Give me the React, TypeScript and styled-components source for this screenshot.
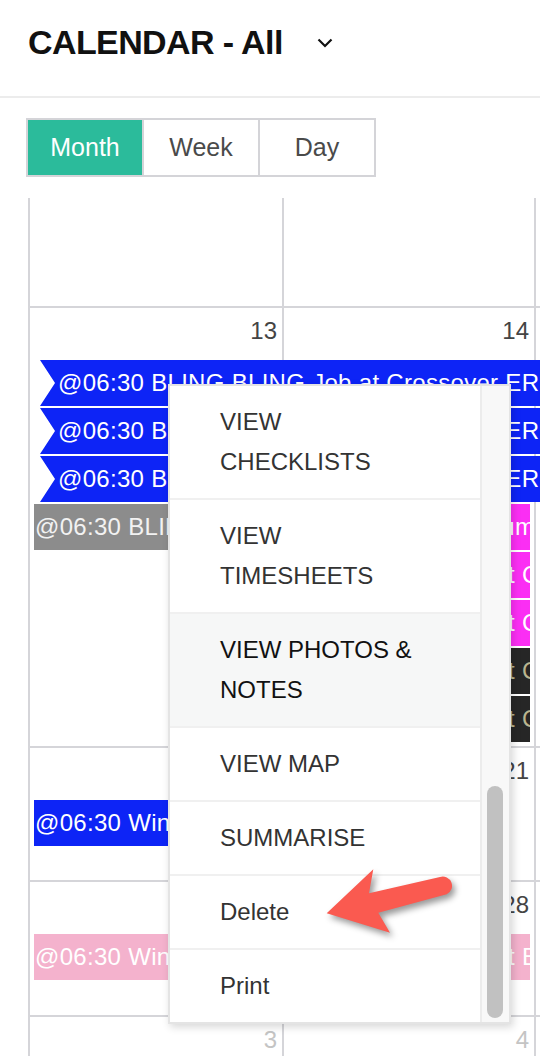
import styled, { createGlobalStyle } from 'styled-components';

const GlobalStyle = createGlobalStyle`
  * { box-sizing: border-box; }
  body {
    margin: 0;
    background: #fff;
    font-family: 'Liberation Sans', Arial, sans-serif;
    overflow: hidden;
  }
`;

const Page = styled.div`
  position: relative;
  width: 540px;
  height: 1056px;
  overflow: hidden;
`;

const Header = styled.header`
  display: flex;
  align-items: center;
  height: 98px;
  padding: 0 28px 12px;
  border-bottom: 2px solid #ececec;
`;

const Title = styled.h1`
  margin: 0;
  font-size: 34px;
  font-weight: 700;
  letter-spacing: -0.6px;
  line-height: 1;
  color: #111;
`;

const Chevron = styled.svg`
  margin-left: 34px;
  margin-top: 2px;
`;

const TabBar = styled.div`
  display: flex;
  width: fit-content;
  margin: 20px 0 0 26px;
  border: 2px solid #d4d4d8;
`;

const Tab = styled.button<{ $active?: boolean }>`
  width: 114px;
  height: 55px;
  padding: 0;
  border: none;
  font-family: inherit;
  font-size: 25px;
  background: ${(p) => (p.$active ? '#2bbb9b' : '#fff')};
  color: ${(p) => (p.$active ? '#fff' : '#4a4a4a')};

  & + & {
    width: 116px;
    border-left: 2px solid #d4d4d8;
  }
`;

const Calendar = styled.div`
  width: 758px;
  margin: 21px 0 0 28px;
`;

const Week = styled.div<{ $rows: number; $height: number }>`
  display: grid;
  grid-template-columns: 254px 252px 252px;
  grid-template-rows: ${(p) => (p.$rows > 0 ? `52px repeat(${p.$rows}, 48px) 1fr` : '52px 1fr')};
  height: ${(p) => p.$height}px;
  border-bottom: 2px solid #d5d5d9;
`;

const DayCell = styled.div<{ $col: number; $muted?: boolean }>`
  grid-row: 1 / -1;
  grid-column: ${(p) => p.$col};
  padding: 9px 5px 0 0;
  border-left: 2px solid #d5d5d9;
  text-align: right;
  font-size: 24px;
  line-height: 28px;
  color: ${(p) => (p.$muted ? '#c4c4c4' : '#444')};
`;

const EventBar = styled.div<{
  $row: number;
  $col: number;
  $span?: number;
  $bg: string;
  $fg?: string;
  $notched?: boolean;
}>`
  grid-row: ${(p) => p.$row + 2};
  grid-column: ${(p) => `${p.$col} / span ${p.$span || 1}`};
  z-index: 1;
  height: 46px;
  margin: 0 4px 0 ${(p) => (p.$notched ? 12 : 6)}px;
  padding-left: ${(p) => (p.$notched ? 18 : 1)}px;
  background: ${(p) => p.$bg};
  color: ${(p) => p.$fg || '#fff'};
  font-size: 24px;
  letter-spacing: 0.3px;
  line-height: 46px;
  white-space: nowrap;
  overflow: hidden;
  clip-path: ${(p) => (p.$notched ? 'polygon(0 0, 100% 0, 100% 100%, 0 100%, 15px 50%)' : 'none')};
`;

const Menu = styled.div`
  position: absolute;
  left: 168px;
  top: 384px;
  z-index: 5;
  display: flex;
  width: 343px;
  height: 640px;
  overflow: hidden;
  background: #fff;
  border: 2px solid #e4e4e4;
  box-shadow: 2px 3px 8px rgba(0, 0, 0, 0.16);
`;

const MenuList = styled.ul`
  flex: 1;
  margin: 0;
  padding: 0;
  list-style: none;
`;

const MenuItem = styled.li<{ $hover?: boolean }>`
  padding: 16px 12px 16px 50px;
  font-size: 24px;
  line-height: 40px;
  color: ${(p) => (p.$hover ? '#111' : '#333')};
  background: ${(p) => (p.$hover ? '#f6f7f7' : '#fff')};
  border-bottom: 2px solid #f0f0f0;

  &:last-child {
    border-bottom: none;
  }
`;

const ScrollGutter = styled.div`
  display: flex;
  flex-direction: column;
  justify-content: flex-end;
  width: 29px;
  padding: 0 6px 4px 5px;
  background: #f8f8f8;
  border-left: 2px solid #ececec;
`;

const ScrollThumb = styled.div`
  height: 232px;
  border-radius: 8px;
  background: #c1c1c1;
`;

const Pointer = styled.svg`
  position: absolute;
  left: 320px;
  top: 861px;
  z-index: 6;
  filter: drop-shadow(3px 4px 3px rgba(0, 0, 0, 0.4));
`;

const BLUE = '#0d24f6';
const MAGENTA = '#fb2ef4';
const DARK = '#262626';
const GREY = '#8c8c8c';
const PINK = '#f4b2cd';

const bling = '@06:30 BLING BLING Job at Crossover ER Hall';

export default function App() {
  return (
    <Page>
      <GlobalStyle />
      <Header>
        <Title>CALENDAR - All</Title>
        <Chevron width="16" height="10" viewBox="0 0 16 10">
          <polyline points="1.5,1.5 8,8 14.5,1.5" fill="none" stroke="#111" strokeWidth="2.2" />
        </Chevron>
      </Header>

      <TabBar>
        <Tab $active>Month</Tab>
        <Tab>Week</Tab>
        <Tab>Day</Tab>
      </TabBar>

      <Calendar>
        <Week $rows={0} $height={110}>
          <DayCell $col={1} />
          <DayCell $col={2} />
          <DayCell $col={3} />
        </Week>

        <Week $rows={8} $height={440}>
          <DayCell $col={1}>13</DayCell>
          <DayCell $col={2}>14</DayCell>
          <DayCell $col={3}>15</DayCell>
          <EventBar $row={0} $col={1} $span={3} $bg={BLUE} $notched>{bling}</EventBar>
          <EventBar $row={1} $col={1} $span={3} $bg={BLUE} $notched>{bling}</EventBar>
          <EventBar $row={2} $col={1} $span={3} $bg={BLUE} $notched>{bling}</EventBar>
          <EventBar $row={3} $col={1} $bg={GREY} $fg="#f2f2f2">@06:30 BLING BLING Job</EventBar>
          <EventBar $row={3} $col={2} $bg={MAGENTA}>@06:30 Pool Job Sum Room</EventBar>
          <EventBar $row={4} $col={2} $bg={MAGENTA}>@06:30 Lawn Job at Crossover</EventBar>
          <EventBar $row={5} $col={2} $bg={MAGENTA}>@06:30 Lawn Job at Crossover</EventBar>
          <EventBar $row={6} $col={2} $bg={DARK} $fg="#b9b58f">@06:30 Lawn Job at  Crossover</EventBar>
          <EventBar $row={7} $col={2} $bg={DARK} $fg="#b9b58f">@06:30 Lawn Job at  Crossover</EventBar>
        </Week>

        <Week $rows={1} $height={134}>
          <DayCell $col={1}>20</DayCell>
          <DayCell $col={2}>21</DayCell>
          <DayCell $col={3}>22</DayCell>
          <EventBar $row={0} $col={1} $bg={BLUE}>@06:30 Window Cleaning</EventBar>
        </Week>

        <Week $rows={1} $height={135}>
          <DayCell $col={1}>27</DayCell>
          <DayCell $col={2}>28</DayCell>
          <DayCell $col={3}>29</DayCell>
          <EventBar $row={0} $col={1} $bg={PINK}>@06:30 Window Cleaning</EventBar>
          <EventBar $row={0} $col={2} $bg={PINK}>@06:30 Lawn Job at Eastside</EventBar>
        </Week>

        <Week $rows={0} $height={120}>
          <DayCell $col={1} $muted>3</DayCell>
          <DayCell $col={2} $muted>4</DayCell>
          <DayCell $col={3} $muted>5</DayCell>
        </Week>
      </Calendar>

      <Menu>
        <MenuList>
          <MenuItem>VIEW<br />CHECKLISTS</MenuItem>
          <MenuItem>VIEW<br />TIMESHEETS</MenuItem>
          <MenuItem $hover>VIEW PHOTOS &amp;<br />NOTES</MenuItem>
          <MenuItem>VIEW MAP</MenuItem>
          <MenuItem>SUMMARISE</MenuItem>
          <MenuItem>Delete</MenuItem>
          <MenuItem>Print</MenuItem>
        </MenuList>
        <ScrollGutter>
          <ScrollThumb />
        </ScrollGutter>
      </Menu>

      <Pointer width="140" height="85" viewBox="0 0 140 85">
        <path
          d="M6.7 52.3 L53.3 8.3 L49 32.3 L120 16 A9.3 9.3 0 0 1 126.7 33.3 L58.3 51.7 L70 71.7 Z"
          fill="#fa5a50"
        />
      </Pointer>
    </Page>
  );
}
